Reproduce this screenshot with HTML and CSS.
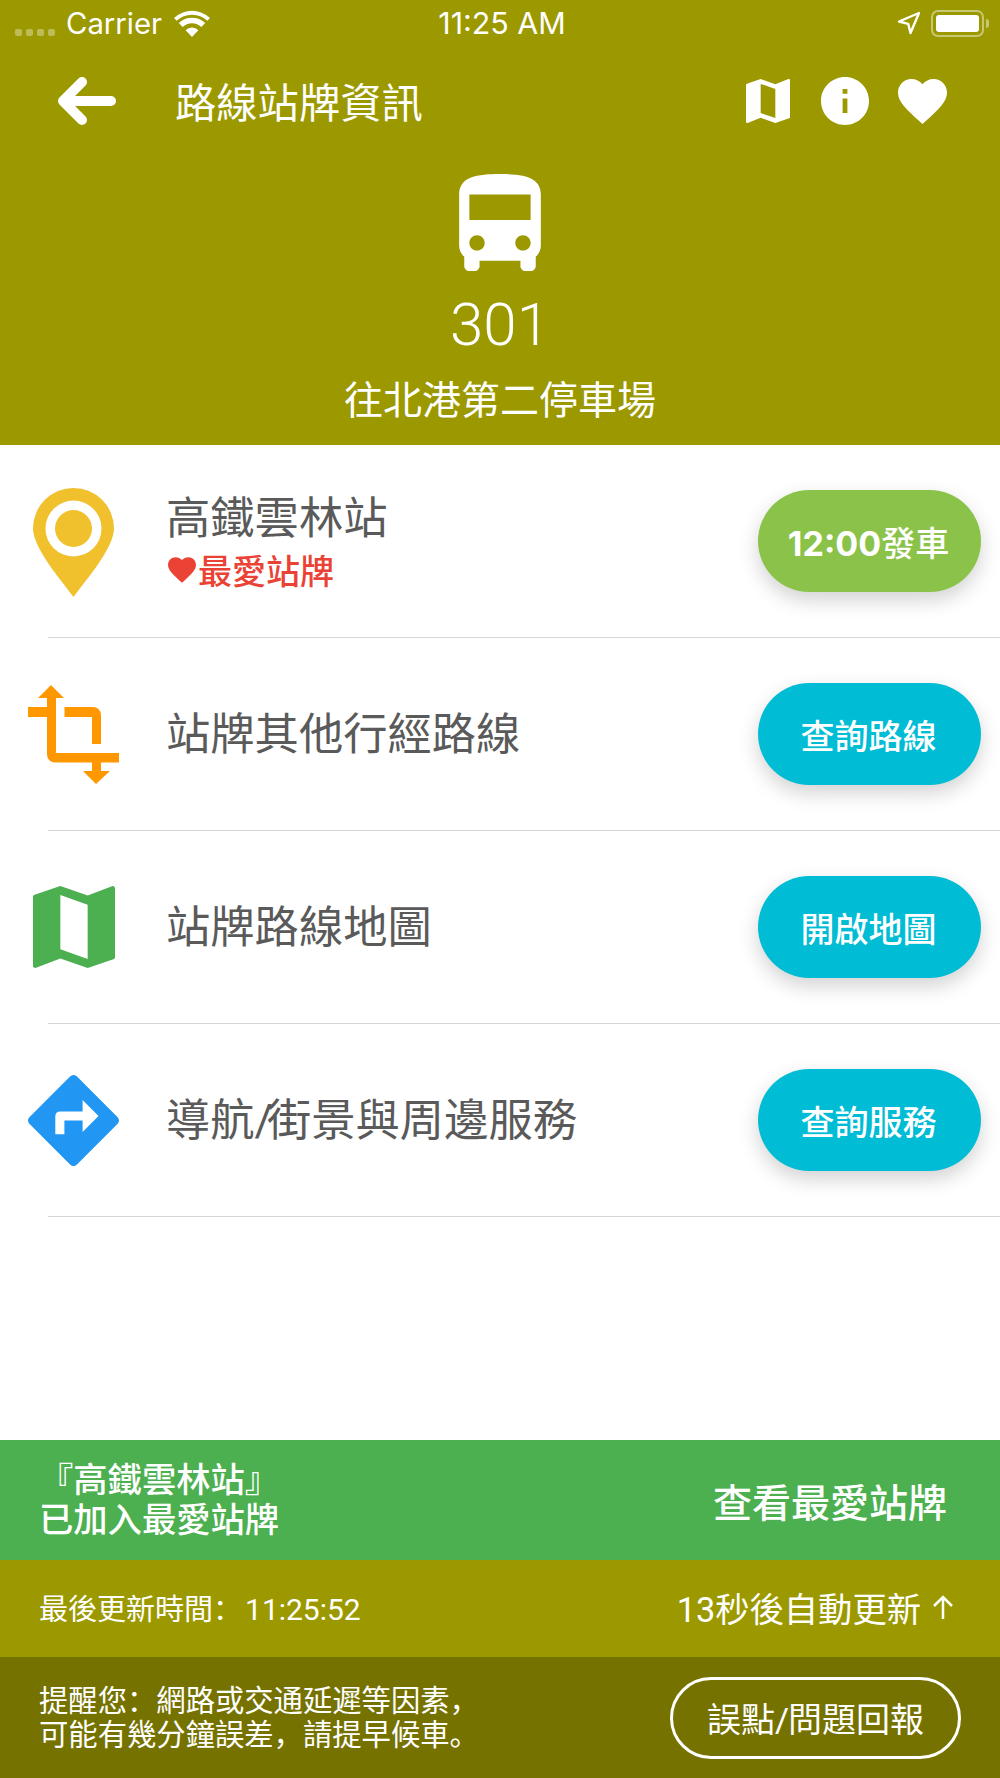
FILE: index.html
```html
<!DOCTYPE html>
<html lang="zh-Hans">
<head>
  <meta charset="UTF-8">
  <title>路線站牌資訊</title>
  <link rel="stylesheet" href="styles.css">
</head>
<body>
  <div class="page">
    <header class="top">
      <div class="status">
        <div class="status-left">
          <span class="dots"><i></i><i></i><i></i><i></i></span>
          <span class="carrier">Carrier</span>
          <svg class="wifi" viewBox="0 0 36 27"><path d="M18 27 11.6 20.2a9 9 0 0 1 12.8 0zM8.6 17 4.8 13a19 19 0 0 1 26.4 0l-3.8 4a13.500 13.500 0 0 0-18.800 0zM2.600 10.800 0 7.900a26.500 26.500 0 0 1 36 0l-2.600 2.900a22.500 22.500 0 0 0-30.800 0z" fill="#fff"/></svg>
        </div>
        <div class="clock">11:25 AM</div>
        <div class="status-right">
          <svg class="locate" viewBox="0 0 24 24"><path d="M22 2 2 10.500l9.200 2.300 2.300 9.200z" fill="none" stroke="#fff" stroke-width="2.400" stroke-linejoin="round"/></svg>
          <span class="battery"><span class="battery-fill"></span></span>
          <span class="battery-tip"></span>
        </div>
      </div>

      <div class="nav">
        <svg class="back" viewBox="0 0 58 48"><path d="M24 5 5 24l19 19M5 24h48" fill="none" stroke="#fff" stroke-width="10" stroke-linecap="round" stroke-linejoin="round"/></svg>
        <h1 class="nav-title">路線站牌資訊</h1>
        <svg class="nav-map" viewBox="3 3 18 18"><path d="M20.500 3l-.16.03L15 5.100 9 3 3.360 4.900c-.21.07-.36.25-.36.48V20.500c0 .28.22.5.5.5l.16-.03L9 18.900l6 2.100 5.640-1.900c.21-.07.36-.25.36-.48V3.500c0-.28-.22-.5-.5-.5zM15 19l-6-2.110V5l6 2.110V19z" fill="#fff"/></svg>
        <svg class="nav-info" viewBox="2 2 20 20"><path d="M12 2C6.480 2 2 6.480 2 12s4.480 10 10 10 10-4.480 10-10S17.520 2 12 2zm1 15h-2v-6h2v6zm0-8h-2V7h2v2z" fill="#fff"/></svg>
        <svg class="nav-heart" viewBox="2 3 20 18.350"><path d="M12 21.350l-1.450-1.320C5.400 15.360 2 12.280 2 8.500 2 5.420 4.420 3 7.500 3c1.740 0 3.410.81 4.500 2.090C13.090 3.810 14.760 3 16.500 3 19.580 3 22 5.420 22 8.500c0 3.780-3.400 6.860-8.550 11.540L12 21.350z" fill="#fff"/></svg>
      </div>

      <div class="route">
        <svg class="bus" viewBox="4 2 16 19"><path d="M4 16c0 .88.39 1.670 1 2.220V20c0 .55.45 1 1 1h1c.55 0 1-.45 1-1v-1h8v1c0 .55.45 1 1 1h1c.55 0 1-.45 1-1v-1.780c.61-.55 1-1.340 1-2.220V6c0-3.500-3.580-4-8-4s-8 .5-8 4v10zm3.500 1c-.83 0-1.500-.67-1.500-1.500S6.670 14 7.500 14s1.500.67 1.500 1.500S8.330 17 7.500 17zm9 0c-.83 0-1.500-.67-1.500-1.500s.67-1.500 1.500-1.500 1.500.67 1.500 1.500-.67 1.500-1.500 1.500zm1.500-6H6V6h12v5z" fill="#fff"/></svg>
        <div class="route-no">301</div>
        <div class="route-to">往北港第二停車場</div>
      </div>
    </header>

    <main class="list">
      <div class="row">
        <div class="row-icon">
          <svg class="pin" viewBox="0 0 81 109"><path d="M40.500 109C28 92 0 60 0 40.500a40.500 40.500 0 0 1 81 0C81 60 53 92 40.500 109z" fill="#f0c12d"/><circle cx="40.500" cy="40.500" r="28" fill="#fff"/><circle cx="40.500" cy="40.500" r="18.500" fill="#f0c12d"/></svg>
        </div>
        <div class="row-text">
          <div class="row-title">高鐵雲林站</div>
          <div class="fav">
            <svg class="fav-heart" viewBox="2 3 20 18.350"><path d="M12 21.350l-1.450-1.320C5.400 15.360 2 12.280 2 8.500 2 5.420 4.420 3 7.500 3c1.740 0 3.410.81 4.500 2.090C13.090 3.810 14.760 3 16.500 3 19.580 3 22 5.420 22 8.500c0 3.780-3.400 6.860-8.550 11.540L12 21.350z" fill="#ea4335"/></svg>
            <span>最愛站牌</span>
          </div>
        </div>
        <button class="pill pill-green"><span class="pill-time">12:00</span>發車</button>
      </div>
      <div class="divider"></div>

      <div class="row">
        <div class="row-icon">
          <svg class="crop" viewBox="28 685 91 99"><path d="M51 685l13 13h-8v55h63v9.500h-18v8.500h9l-14 13-13-13h9v-8.500H55a8 8 0 0 1-8-8V717H28v-10h19v-9h-9zM64.500 707H93a8 8 0 0 1 8 8v29H92v-27H64.500z" fill="#ff9800"/></svg>
        </div>
        <div class="row-text">
          <div class="row-title">站牌其他行經路線</div>
        </div>
        <button class="pill">查詢路線</button>
      </div>
      <div class="divider"></div>

      <div class="row">
        <div class="row-icon">
          <svg class="big-map" viewBox="3 3 18 18"><path d="M20.500 3l-.16.03L15 5.100 9 3 3.360 4.900c-.21.07-.36.25-.36.48V20.500c0 .28.22.5.5.5l.16-.03L9 18.900l6 2.100 5.640-1.900c.21-.07.36-.25.36-.48V3.500c0-.28-.22-.5-.5-.5zM15 19l-6-2.110V5l6 2.110V19z" fill="#4caf50"/></svg>
        </div>
        <div class="row-text">
          <div class="row-title">站牌路線地圖</div>
        </div>
        <button class="pill">開啟地圖</button>
      </div>
      <div class="divider"></div>

      <div class="row">
        <div class="row-icon">
          <svg class="diamond" viewBox="2 2 20 20"><path d="M21.710 11.290l-9-9c-.39-.39-1.020-.39-1.410 0l-9 9c-.39.39-.39 1.020 0 1.410l9 9c.39.39 1.020.39 1.410 0l9-9c.39-.38.39-1.010 0-1.410zM14 14.500V12h-4v3H8v-4c0-.55.45-1 1-1h5V7.500l3.500 3.500-3.500 3.500z" fill="#2196f3"/></svg>
        </div>
        <div class="row-text">
          <div class="row-title">導航<span class="slash">/</span>街景與周邊服務</div>
        </div>
        <button class="pill">查詢服務</button>
      </div>
      <div class="divider"></div>
    </main>

    <footer class="bottom">
      <div class="toast">
        <div class="toast-msg">『高鐵雲林站』<br>已加入最愛站牌</div>
        <div class="toast-link">查看最愛站牌</div>
      </div>
      <div class="update">
        <div class="update-time">最後更新時間：<span class="update-clock">11:25:52</span></div>
        <div class="update-auto">
          <span>13秒後自動更新</span>
          <svg class="up-arrow" viewBox="0 0 20 24"><path d="M10 24V2M1 11l9-9 9 9" fill="none" stroke="#fff" stroke-width="2.500"/></svg>
        </div>
      </div>
      <div class="notice">
        <div class="notice-msg">提醒您：網路或交通延遲等因素，<br>可能有幾分鐘誤差，請提早候車。</div>
        <button class="report">誤點<span class="report-slash">/</span>問題回報</button>
      </div>
    </footer>
  </div>
</body>
</html>
```

FILE: styles.css
```css
* {
  box-sizing: border-box;
}

body {
  margin: 0;
  font-family: "Roboto", "Noto Sans CJK SC", sans-serif;
  color: #fff;
  background: #fff;
}

.page {
  display: flex;
  flex-direction: column;
  height: 1778px;
  overflow: hidden;
}

svg {
  display: block;
  flex-shrink: 0;
}

/* top */
.top {
  height: 445px;
  background: #9c9900;
}

.status {
  display: grid;
  grid-template-columns: 1fr auto 1fr;
  align-items: center;
  height: 46px;
  padding: 0 11px 0 15px;
}

.status-left {
  display: flex;
  align-items: center;
}

.dots {
  display: flex;
  gap: 4px;
  margin: 18px 11px 0 0;
}

.dots i {
  width: 7px;
  height: 7px;
  border-radius: 2px;
  background: rgba(255, 255, 255, 0.35);
}

.carrier,
.clock {
  font-family: "Inter", "Roboto", sans-serif;
}

.carrier {
  font-size: 29.300px;
}

.clock {
  font-size: 30.400px;
}

.wifi {
  width: 36px;
  height: 27px;
  margin-left: 12px;
}

.status-right {
  display: flex;
  align-items: center;
  justify-content: flex-end;
}

.locate {
  width: 24px;
  height: 24px;
  margin-right: 10px;
}

.battery {
  display: flex;
  width: 53px;
  height: 27px;
  padding: 3px;
  border: 2px solid rgba(255, 255, 255, 0.45);
  border-radius: 7px;
}

.battery-fill {
  flex: 1;
  border-radius: 3px;
  background: #fff;
}

.battery-tip {
  width: 3px;
  height: 9px;
  margin-left: 2px;
  border-radius: 0 3px 3px 0;
  background: rgba(255, 255, 255, 0.45);
}

.nav {
  display: flex;
  align-items: center;
  height: 110px;
  padding-left: 58px;
}

.back {
  width: 58px;
  height: 48px;
}

.nav-title {
  flex: 1;
  margin: -2px 0 0 59px;
  font-size: 41.300px;
  font-weight: 400;
}

.nav-map {
  width: 44px;
  height: 44px;
}

.nav-info {
  width: 48px;
  height: 48px;
  margin-left: 31px;
}

.nav-heart {
  width: 49px;
  height: 45px;
  margin: 0 53px 0 29px;
}

.route {
  display: flex;
  flex-direction: column;
  align-items: center;
  padding-top: 18px;
}

.bus {
  width: 82px;
  height: 97px;
}

.route-no {
  margin-top: 19px;
  font-size: 60px;
  font-weight: 300;
  line-height: 70px;
}

.route-to {
  margin-top: 17px;
  font-size: 39px;
  line-height: 48px;
}

/* list */
.list {
  flex: 1;
}

.row {
  display: flex;
  align-items: center;
  height: 192px;
  padding: 0 19px 0 28px;
}

.row-icon {
  display: flex;
  justify-content: center;
  width: 91px;
}

.pin {
  width: 81px;
  height: 109px;
  margin-bottom: -2px;
}

.crop {
  width: 91px;
  height: 99px;
}

.big-map {
  width: 82px;
  height: 82px;
}

.diamond {
  width: 91px;
  height: 91px;
}

.row-text {
  flex: 1;
  margin-left: 47px;
  padding-top: 2px;
}

.row-title {
  font-size: 44.300px;
  line-height: 56px;
  color: #5a5a5a;
}

.slash {
  letter-spacing: -6px;
}

.fav {
  display: flex;
  align-items: center;
  height: 44px;
  margin: 1px 0 2px 2px;
  font-size: 34px;
  font-weight: 500;
  color: #ea4335;
}

.fav-heart {
  width: 28px;
  height: 26px;
  margin-right: 2px;
}

.pill {
  width: 223px;
  height: 102px;
  padding: 0 2px 0 0;
  border: none;
  border-radius: 51px;
  font-family: inherit;
  font-size: 34px;
  font-weight: 500;
  color: #fff;
  background: #00bcd4;
  box-shadow: 0 8px 20px rgba(0, 0, 0, 0.18);
}

.pill-green {
  background: #8bc34a;
}

.pill-time {
  font-family: "Inter", "Roboto", sans-serif;
  font-weight: 700;
}

.divider {
  height: 1px;
  margin-left: 48px;
  background: #d6d6d6;
}

/* bottom */
.toast {
  display: flex;
  align-items: center;
  justify-content: space-between;
  height: 120px;
  padding: 0 53px 0 39px;
  background: #4caf50;
  font-weight: 500;
}

.toast-msg {
  font-size: 34.300px;
  line-height: 40px;
  text-align: center;
}

.toast-link {
  font-size: 39px;
}

.update {
  display: flex;
  align-items: center;
  justify-content: space-between;
  height: 97px;
  padding: 0 47px 4px 39px;
  background: #9c9900;
}

.update-time {
  font-size: 29px;
}

.update-clock {
  margin-left: 3px;
  font-size: 30px;
}

.update-auto {
  display: flex;
  align-items: center;
  font-size: 34.300px;
}

.up-arrow {
  width: 20px;
  height: 24px;
  margin-left: 12px;
}

.notice {
  display: flex;
  align-items: center;
  justify-content: space-between;
  height: 121px;
  padding: 0 39px;
  background: #757200;
}

.notice-msg {
  font-size: 29.330px;
  line-height: 34px;
}

.report {
  width: 291px;
  height: 82px;
  border: 3px solid #fff;
  border-radius: 41px;
  background: none;
  font-family: inherit;
  font-size: 34px;
  color: #fff;
}

.report-slash {
  letter-spacing: -1px;
}
```
